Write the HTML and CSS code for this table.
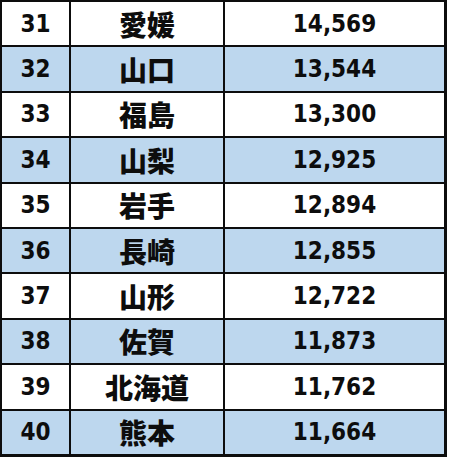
FILE: index.html
```html
<!DOCTYPE html>
<html lang="ja">
<head>
<meta charset="utf-8">
<link rel="stylesheet" href="styles.css">
</head>
<body>
<div class="table">
  <div class="row"><div class="cell num">31</div><div class="cell pref">愛媛</div><div class="cell num">14,569</div></div>
  <div class="row alt"><div class="cell num">32</div><div class="cell pref">山口</div><div class="cell num">13,544</div></div>
  <div class="row"><div class="cell num">33</div><div class="cell pref">福島</div><div class="cell num">13,300</div></div>
  <div class="row alt"><div class="cell num">34</div><div class="cell pref">山梨</div><div class="cell num">12,925</div></div>
  <div class="row"><div class="cell num">35</div><div class="cell pref">岩手</div><div class="cell num">12,894</div></div>
  <div class="row alt"><div class="cell num">36</div><div class="cell pref">長崎</div><div class="cell num">12,855</div></div>
  <div class="row"><div class="cell num">37</div><div class="cell pref">山形</div><div class="cell num">12,722</div></div>
  <div class="row alt"><div class="cell num">38</div><div class="cell pref">佐賀</div><div class="cell num">11,873</div></div>
  <div class="row"><div class="cell num">39</div><div class="cell pref">北海道</div><div class="cell num">11,762</div></div>
  <div class="row alt"><div class="cell num">40</div><div class="cell pref">熊本</div><div class="cell num">11,664</div></div>
</div>
</body>
</html>
```
FILE: styles.css
```css
html, body {
  margin: 0;
  padding: 0;
  background: #fff;
}
.table {
  width: 442px;
  display: grid;
  grid-auto-rows: 43.4px;
  gap: 2px;
  background: #0d0d0d;
  padding: 2px 3px 3px 2px;
}
.row {
  display: grid;
  grid-template-columns: 67px 152px 219px;
  gap: 2px;
}
.cell {
  background: #fff;
  display: flex;
  align-items: center;
  justify-content: center;
  color: #0d0d0d;
  font-weight: bold;
}
.row.alt .cell {
  background: #bdd7ee;
}
.num {
  font-family: "DejaVu Sans Condensed", "DejaVu Sans", sans-serif;
  font-stretch: condensed;
  font-size: 24px;
}
.pref {
  font-family: "Noto Sans CJK JP", sans-serif;
  font-weight: 900;
  font-size: 28px;
}
```
